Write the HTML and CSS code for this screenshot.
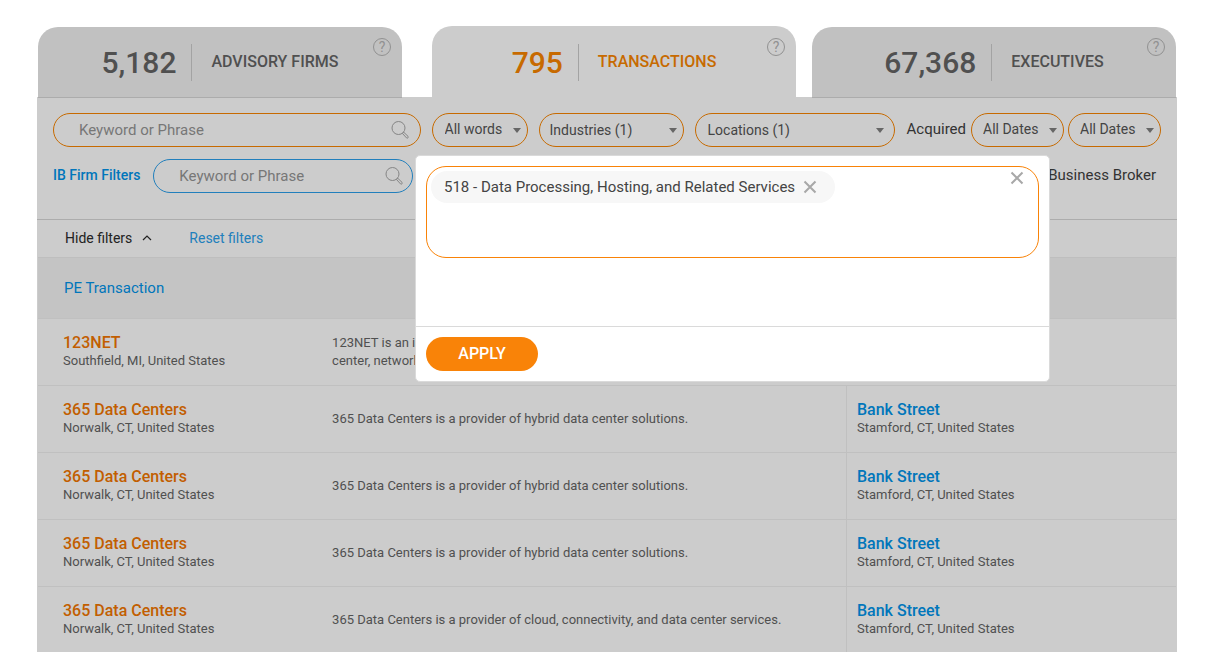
FILE: index.html
```html
<!DOCTYPE html>
<html lang="en">
<head>
<meta charset="utf-8">
<title>Transactions</title>
<link rel="stylesheet" href="styles.css">
</head>
<body>
<svg class="sprite" aria-hidden="true">
  <symbol id="search" viewBox="0 0 18 18"><circle cx="7.500" cy="7" r="6.500"/><path d="M11.500 12.500l1.300-1.200 4.200 4a1.100 1.100 0 0 1-1.500 1.600z"/></symbol>
  <symbol id="close" viewBox="0 0 14 14"><path d="M1.500 1.500l11 11M12.500 1.500l-11 11"/></symbol>
</svg>
<main class="page">
  <nav class="tabs">
    <div class="tab tab-first">
      <a class="tab-link" href="#firms"><span class="count">5,182</span><span class="tab-name">ADVISORY FIRMS</span></a>
      <button class="help" type="button" aria-label="About advisory firms">?</button>
    </div>
    <div class="tab tab-active">
      <a class="tab-link" href="#transactions"><span class="count">795</span><span class="tab-name">TRANSACTIONS</span></a>
      <button class="help" type="button" aria-label="About transactions">?</button>
    </div>
    <div class="tab">
      <a class="tab-link" href="#executives"><span class="count">67,368</span><span class="tab-name">EXECUTIVES</span></a>
      <button class="help" type="button" aria-label="About executives">?</button>
    </div>
  </nav>

  <section class="panel">
    <form class="filters">
      <div class="filter-row">
        <div class="search search-main">
          <input type="text" placeholder="Keyword or Phrase" aria-label="Transaction keyword or phrase">
          <svg class="search-icon" aria-hidden="true"><use href="#search"/></svg>
        </div>
        <div class="pick pick-words"><select aria-label="Word matching"><option>All words</option></select></div>
        <button class="pick pick-button pick-industries" type="button">Industries (1)</button>
        <button class="pick pick-button pick-locations" type="button">Locations (1)</button>
        <div class="dates">
          <span class="dates-label" id="acquired">Acquired</span>
          <div class="pick pick-date"><select aria-labelledby="acquired"><option>All Dates</option></select></div>
          <div class="pick pick-date"><select aria-labelledby="acquired"><option>All Dates</option></select></div>
        </div>
      </div>
      <div class="filter-row filter-row-firm">
        <label class="firm-label" for="firm">IB Firm Filters</label>
        <div class="search search-firm">
          <input id="firm" type="text" placeholder="Keyword or Phrase">
          <svg class="search-icon" aria-hidden="true"><use href="#search"/></svg>
        </div>
        <span class="broker">Business Broker</span>
      </div>
    </form>

    <div class="actions">
      <button class="hide" type="button">Hide filters
        <svg class="caret" viewBox="0 0 10 6" aria-hidden="true"><path d="M1 5l4-4 4 4"/></svg>
      </button>
      <a class="reset" href="#reset">Reset filters</a>
    </div>

    <table class="results">
      <thead>
        <tr><th class="col-name"><a href="#pe">PE Transaction</a></th><th class="col-about"></th><th class="col-buyer"></th></tr>
      </thead>
      <tbody>
        <tr>
          <td><a class="name" href="#r1">123NET</a><span class="place">Southfield, MI, United States</span></td>
          <td class="about">123NET is an indie<br>center, network</td>
          <td></td>
        </tr>
        <tr>
          <td><a class="name" href="#r2">365 Data Centers</a><span class="place">Norwalk, CT, United States</span></td>
          <td class="about">365 Data Centers is a provider of hybrid data center solutions.</td>
          <td class="buyer"><a class="name" href="#b2">Bank Street</a><span class="place">Stamford, CT, United States</span></td>
        </tr>
        <tr>
          <td><a class="name" href="#r3">365 Data Centers</a><span class="place">Norwalk, CT, United States</span></td>
          <td class="about">365 Data Centers is a provider of hybrid data center solutions.</td>
          <td class="buyer"><a class="name" href="#b3">Bank Street</a><span class="place">Stamford, CT, United States</span></td>
        </tr>
        <tr>
          <td><a class="name" href="#r4">365 Data Centers</a><span class="place">Norwalk, CT, United States</span></td>
          <td class="about">365 Data Centers is a provider of hybrid data center solutions.</td>
          <td class="buyer"><a class="name" href="#b4">Bank Street</a><span class="place">Stamford, CT, United States</span></td>
        </tr>
        <tr>
          <td><a class="name" href="#r5">365 Data Centers</a><span class="place">Norwalk, CT, United States</span></td>
          <td class="about">365 Data Centers is a provider of cloud, connectivity, and data center services.</td>
          <td class="buyer"><a class="name" href="#b5">Bank Street</a><span class="place">Stamford, CT, United States</span></td>
        </tr>
      </tbody>
    </table>

    <div class="popup" role="dialog" aria-label="Industries">
      <div class="popup-body">
        <div class="chips">
          <span class="chip">518 - Data Processing, Hosting, and Related Services
            <button class="close" type="button" aria-label="Remove"><svg aria-hidden="true"><use href="#close"/></svg></button>
          </span>
          <button class="close" type="button" aria-label="Close"><svg aria-hidden="true"><use href="#close"/></svg></button>
        </div>
      </div>
      <div class="popup-foot"><button class="apply" type="button">APPLY</button></div>
    </div>
  </section>
</main>
</body>
</html>
```

FILE: styles.css
```css
* { box-sizing: border-box; }
html { overflow: hidden; }
body {
  margin: 0;
  background: #fff;
  color: #333;
  font-family: Roboto, "Liberation Sans", sans-serif;
  font-size: 15px;
  line-height: 20px;
}
a { color: inherit; text-decoration: none; }
button, input, select { font: inherit; color: inherit; margin: 0; padding: 0; border: 0; background: none; }
button { cursor: pointer; }
.sprite { display: none; }

.page { padding: 26px 48px 0 37px; }

.tabs { display: flex; align-items: flex-end; gap: 16px; padding: 0 1px; }
.tab {
  position: relative;
  z-index: 1;
  flex: 1;
  height: 71px;
  margin-bottom: -1px;
  background: #c1c1c1;
  border-bottom: 1px solid #acacac;
  border-radius: 20px 20px 0 0;
  color: #505050;
}
.tab-first { margin-right: 14px; }
.tab-active { height: 72px; padding-top: 1px; background: #ccc; border-bottom-color: #ccc; color: #c76a00; }
.tab-link { display: flex; align-items: center; justify-content: center; height: 70px; }
.count {
  padding-right: 15px;
  border-right: 1px solid #a3a3a3;
  font-size: 30px;
  font-weight: 500;
  line-height: 37px;
}
.tab-name { padding-left: 19px; font-size: 16px; font-weight: 500; }
.help {
  position: absolute;
  top: 11px;
  right: 11px;
  width: 18px;
  height: 18px;
  border: 1px solid #919191;
  border-radius: 50%;
  color: #919191;
  font-size: 14px;
  line-height: 16px;
}
.tab-active .help { top: 12px; }

.panel { position: relative; background: #ccc; }
.filters {
  display: grid;
  gap: 12px;
  padding: 16px 16px 26px;
  border-bottom: 1px solid #acacac;
}
.filter-row { display: flex; align-items: center; gap: 11px; }
.filter-row-firm { gap: 13px; }
.search {
  display: flex;
  align-items: center;
  height: 34px;
  padding: 0 9px 0 25px;
  border: 1px solid #c76a00;
  border-radius: 17px;
}
.search-main { flex: 1; padding-right: 11px; }
.search-firm { width: 260px; border-color: #217fbc; }
.search input { flex: 1; min-width: 0; outline: 0; }
.search input::placeholder { color: #777; opacity: 1; }
.search-icon { width: 18px; height: 18px; fill: none; stroke: #858585; }

.pick {
  position: relative;
  height: 34px;
  border: 1px solid #c76a00;
  border-radius: 17px;
  color: #444;
  font-size: 14px;
}
.pick::after {
  content: "";
  position: absolute;
  top: 14px;
  right: 6px;
  border: 4px solid transparent;
  border-top: 5px solid #666;
  border-bottom: 0;
  pointer-events: none;
}
.pick select { width: 100%; height: 30px; padding-left: 12px; appearance: none; outline: 0; }
.pick-button { padding-left: 10px; text-align: left; }
.pick-words { width: 96px; }
.pick-industries { width: 145px; }
.pick-locations { width: 200px; padding-left: 12px; }
.pick-locations::after { right: 10px; }
.dates { display: flex; align-items: center; gap: 4px; }
.dates-label { padding: 0 1px 2px; }
.pick-date { width: 93px; }
.pick-date select { padding-left: 11px; }

.firm-label { padding-bottom: 2px; color: #0076bb; font-size: 14px; font-weight: 500; }
.broker { margin-left: auto; padding: 0 5px 2px 0; }

.actions {
  display: flex;
  align-items: center;
  gap: 37px;
  height: 38px;
  margin: 0 1px;
  padding: 0 27px 2px;
  border-bottom: 1px solid #bebebe;
  font-size: 14px;
}
.hide { display: flex; align-items: center; gap: 10px; color: #222; }
.caret { width: 10px; height: 6px; fill: none; stroke: #222; stroke-width: 1.2; }
.reset { color: #217fbc; }

.results { width: 100%; border: 0 solid #ccc; border-width: 0 1px; border-spacing: 0; table-layout: fixed; }
.results th {
  height: 61px;
  padding: 0 26px;
  background: #c4c4c4;
  border-bottom: 1px solid #c0c0c0;
  color: #0076bb;
  font-weight: 400;
  text-align: left;
}
.col-name { width: 24%; }
.col-buyer { width: 29%; }
.results td {
  height: 67px;
  padding: 0 10px 0 25px;
  border-bottom: 1px solid #c0c0c0;
  color: #505050;
  font-size: 13px;
  line-height: 18px;
}
.results td.about { padding-left: 21px; }
.results td.buyer { padding-left: 10px; border-left: 1px solid #c0c0c0; }
.name, .place { display: block; }
.name { color: #c25e00; font-size: 16px; font-weight: 500; }
.buyer .name { color: #0076bb; }

.popup {
  position: absolute;
  z-index: 2;
  top: 58px;
  left: 378px;
  right: 127px;
  background: #fff;
  border: 1px solid #dadada;
  border-radius: 5px;
}
.popup-body { min-height: 170px; padding: 10px; }
.chips {
  display: flex;
  align-items: flex-start;
  justify-content: space-between;
  min-height: 92px;
  padding: 4px 14px 4px 4px;
  border: 1px solid #f98308;
  border-radius: 20px;
}
.chip {
  display: flex;
  align-items: center;
  gap: 8px;
  height: 32px;
  padding: 0 18px 0 13px;
  background: #f7f7f7;
  border-radius: 16px;
  color: #444;
}
.close { display: block; width: 14px; height: 14px; }
.close svg { display: block; width: 14px; height: 14px; stroke: #a8a8a8; stroke-width: 2; }
.popup-foot { padding: 10px; border-top: 1px solid #dadada; }
.apply {
  display: block;
  width: 112px;
  height: 34px;
  background: #f98308;
  border-radius: 17px;
  color: #fff;
  font-size: 16px;
  font-weight: 500;
}
```
